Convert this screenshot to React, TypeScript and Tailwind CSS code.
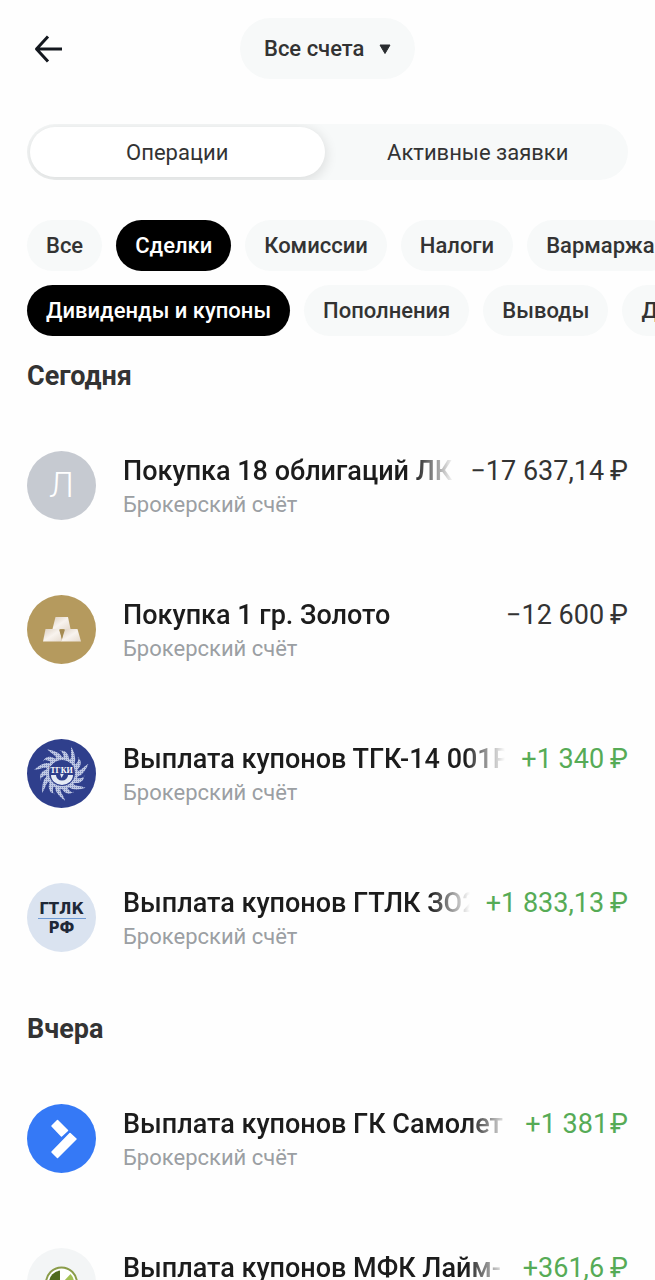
import { useState, type ReactNode } from "react";
import clsx from "clsx";

const TABS = ["Операции", "Активные заявки"];

const FILTER_ROWS = [
  ["Все", "Сделки", "Комиссии", "Налоги", "Вармаржа"],
  ["Дивиденды и купоны", "Пополнения", "Выводы", "Другое"],
];

type Operation = {
  title: string;
  amount: string;
  income?: boolean;
  tight?: boolean;
  logo: ReactNode;
};

function LetterLogo() {
  return (
    <span className="flex size-full items-center justify-center bg-[#c6cad1] text-[35px] leading-none font-light text-white">
      Л
    </span>
  );
}

function GoldLogo() {
  return (
    <svg viewBox="0 0 69 69" className="size-full" aria-hidden="true">
      <defs>
        <linearGradient id="ingot" x1="0" y1="0" x2="1" y2="1">
          <stop offset="0" stopColor="#dccfc0" />
          <stop offset="0.5" stopColor="#f8f3ee" />
          <stop offset="1" stopColor="#e6dbcf" />
        </linearGradient>
      </defs>
      <rect width="69" height="69" fill="#b59a5e" />
      <g fill="url(#ingot)">
        <path d="M28.500 22H41L43.500 34H25.500Z" />
        <path d="M18.500 34H33L35 46.500H16Z" />
        <path d="M37 34H50.500L54 46.500H34.500Z" />
      </g>
      <path d="M32 34.500H38L35 44Z" fill="#a58b52" />
    </svg>
  );
}

const RAYS = Array.from({ length: 14 }, (_, i) => {
  const a = (i / 14) * Math.PI * 2;
  const outer = i % 2 ? 22 : 28;
  const p = (r: number, t: number) =>
    `${(35 + r * Math.cos(t)).toFixed(1)} ${(34 + r * Math.sin(t)).toFixed(1)}`;
  return `M${p(14, a - 0.1)}Q${p(18, a - 0.12)} ${p(20, a - 0.2)}Q${p(24, a - 0.3)} ${p(outer, a - 0.34)}Q${p(24, a - 0.1)} ${p(19, a + 0.1)}Q${p(17, a + 0.2)} ${p(14, a + 0.3)}Z`;
}).join("");

function SunLogo() {
  return (
    <svg viewBox="0 0 69 69" className="size-full" aria-hidden="true">
      <defs>
        <pattern id="weave" width="2" height="2" patternUnits="userSpaceOnUse">
          <rect width="2" height="2" fill="#c0c9e4" />
          <rect width="1" height="1" fill="#7c8bbf" />
        </pattern>
      </defs>
      <rect width="69" height="69" fill="#2f3f8c" />
      <path d={RAYS} fill="url(#weave)" />
      <circle cx="35" cy="34" r="14.500" fill="none" stroke="url(#weave)" strokeWidth="3" />
      <path d="M24 36A11 10 0 0 0 46 36L41 36A6 5.500 0 0 1 29 36Z" fill="#e5ebf5" />
      <path d="M33 34.500H37L34.500 39Z" fill="#e5ebf5" />
      <text
        x="34.500"
        y="33.500"
        textAnchor="middle"
        fontSize="8"
        fontFamily="Liberation Serif, serif"
        fontWeight="700"
        fill="#fff"
        stroke="#2f3f8c"
        strokeWidth="1.500"
        paintOrder="stroke"
      >
        ТГКИ
      </text>
    </svg>
  );
}

function GtlkLogo() {
  return (
    <span className="flex size-full flex-col items-center justify-center bg-[#dae3f0] pt-[3px] font-['DejaVu_Sans',sans-serif] text-[15px] leading-[18px] font-bold text-[#202838]">
      <span>ГТЛК</span>
      <span className="h-px w-12 bg-[#6f9ad3]" />
      <span>РФ</span>
    </span>
  );
}

function ArrowLogo() {
  return (
    <svg viewBox="0 0 69 69" className="size-full" aria-hidden="true">
      <rect width="69" height="69" fill="#3579f6" />
      <g fill="#fff" stroke="#fff" strokeWidth="1.500" strokeLinejoin="round">
        <path d="M30.500 16.500L40.500 26.500L34.500 32L25 22Z" />
        <path d="M43 29.500L49 35L30.500 53.500L25 48Z" />
      </g>
    </svg>
  );
}

function LimeLogo() {
  return (
    <svg viewBox="0 0 69 69" className="size-full" aria-hidden="true">
      <rect width="69" height="69" fill="#f3f5f6" />
      <circle cx="34.500" cy="35" r="15.500" fill="#fff" stroke="#8a9c4a" strokeWidth="2" />
      <path d="M33 34V22.500A12.500 12.500 0 0 0 22 34Z" fill="#4f6b1c" />
      <path d="M36 34L43.500 26A12.500 12.500 0 0 1 47 34Z" fill="#a3c054" />
      <path d="M22 37H47A12.500 12.500 0 0 1 22 37Z" fill="#7f9e35" />
    </svg>
  );
}

const GROUPS: { day: string; items: Operation[] }[] = [
  {
    day: "Сегодня",
    items: [
      { title: "Покупка 18 облигаций ЛК", amount: "−17 637,14", logo: <LetterLogo /> },
      { title: "Покупка 1 гр. Золото", amount: "−12 600", logo: <GoldLogo /> },
      { title: "Выплата купонов ТГК-14 001Р", amount: "+1 340", income: true, logo: <SunLogo /> },
      { title: "Выплата купонов ГТЛК ЗО2", amount: "+1 833,13", income: true, logo: <GtlkLogo /> },
    ],
  },
  {
    day: "Вчера",
    items: [
      { title: "Выплата купонов ГК Самолет", amount: "+1 381", income: true, tight: true, logo: <ArrowLogo /> },
      { title: "Выплата купонов МФК Лайм-", amount: "+361,6", income: true, logo: <LimeLogo /> },
    ],
  },
];

function OperationRow({ item }: { item: Operation }) {
  return (
    <li className="flex h-36 items-center">
      <span className="size-[69px] shrink-0 overflow-hidden rounded-full">{item.logo}</span>
      <div className="mt-1 ml-[27px] min-w-0 flex-1">
        <div className="flex items-center gap-4 text-[27px] leading-9">
          <h3 className="min-w-0 flex-1 overflow-hidden font-medium whitespace-nowrap text-[#1c1c1c] [mask-image:linear-gradient(to_left,transparent,black_40px)]">
            {item.title}
          </h3>
          <span
            className={clsx(
              "flex shrink-0 whitespace-nowrap",
              item.tight ? "gap-0.5" : "gap-1.5",
              item.income ? "text-[#56ab56]" : "text-[#333]",
            )}
          >
            <span>{item.amount}</span>
            <span>₽</span>
          </span>
        </div>
        <p className="text-[22px] leading-8 text-[#9b9fa3]">Брокерский счёт</p>
      </div>
    </li>
  );
}

export default function App() {
  const [tab, setTab] = useState(TABS[0]);
  const [active, setActive] = useState(["Сделки", "Дивиденды и купоны"]);

  const toggle = (name: string) =>
    setActive((list) => (list.includes(name) ? list.filter((n) => n !== name) : [...list, name]));

  return (
    <div className="flex h-screen flex-col overflow-hidden bg-[#fefefe] font-['Roboto',sans-serif] text-[#333]">
      <header className="grid shrink-0 grid-cols-[1fr_auto_1fr] items-center px-7 pt-[18px]">
        <button type="button" aria-label="Назад" className="flex size-10 items-center justify-center">
          <svg viewBox="0 0 40 40" className="size-10" fill="none" stroke="#14181f" strokeWidth="3" aria-hidden="true">
            <path d="M34 20H9M20 7.500L8.500 20L20 32.500" strokeLinejoin="round" />
          </svg>
        </button>
        <label className="relative flex items-center">
          <select
            aria-label="Счёт"
            className="h-[61px] cursor-pointer appearance-none rounded-full bg-[#f7f9f9] pr-[50px] pl-6 text-[22px] font-medium"
          >
            <option>Все счета</option>
          </select>
          <svg viewBox="0 0 12 12" className="pointer-events-none absolute right-6 size-3" aria-hidden="true">
            <path d="M1 2H11L6 10.500Z" fill="#2a2d30" stroke="#2a2d30" strokeLinejoin="round" />
          </svg>
        </label>
      </header>

      <div role="tablist" className="mx-[27px] mt-[45px] flex h-14 shrink-0 gap-1.5 overflow-hidden rounded-full bg-[#f7f9f9] p-[3px]">
        {TABS.map((name) => (
          <button
            key={name}
            type="button"
            role="tab"
            aria-selected={tab === name}
            onClick={() => setTab(name)}
            className={clsx(
              "flex-1 rounded-full text-[22px]",
              tab === name && "bg-white shadow-[0_3px_12px_2px_rgba(0,0,0,0.1)]",
            )}
          >
            {name}
          </button>
        ))}
      </div>

      <div className="mt-10 flex shrink-0 flex-col gap-3.5">
        {FILTER_ROWS.map((row) => (
          <div key={row[0]} className="flex gap-3.5 overflow-x-auto px-[27px] [scrollbar-width:none]">
            {row.map((name) => (
              <button
                key={name}
                type="button"
                aria-pressed={active.includes(name)}
                onClick={() => toggle(name)}
                className={clsx(
                  "h-[51px] shrink-0 rounded-full px-[19px] text-[22px] font-medium whitespace-nowrap",
                  active.includes(name) ? "bg-black text-white" : "bg-[#f7f9f9] text-[#333]",
                )}
              >
                {name}
              </button>
            ))}
          </div>
        ))}
      </div>

      <main className="min-h-0 flex-1 overflow-y-auto px-[27px] [scrollbar-width:none]">
        {GROUPS.map((group) => (
          <section key={group.day} className="pt-6">
            <h2 className="mb-[21px] text-[27px] leading-8 font-bold">{group.day}</h2>
            <ul>
              {group.items.map((item) => (
                <OperationRow key={item.title} item={item} />
              ))}
            </ul>
          </section>
        ))}
      </main>
    </div>
  );
}
